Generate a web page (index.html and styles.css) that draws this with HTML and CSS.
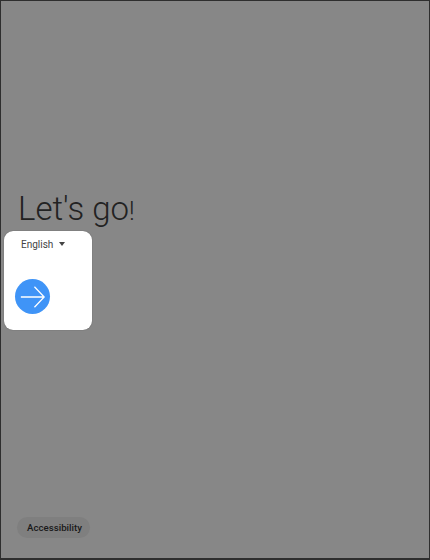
FILE: index.html
```html
<!DOCTYPE html>
<html lang="en">
<head>
  <meta charset="UTF-8" />
  <meta name="viewport" content="width=device-width, initial-scale=1.0">
  <title>Let's go!</title>
  <link rel="stylesheet" href="styles.css">
</head>
<body>
  <div class="screen">
    <div class="main">
      <h1 class="title">Let's go<span class="bang">!</span></h1>
      <div class="card">
        <div class="language">
          <span>English</span>
          <span class="caret"></span>
        </div>
        <button class="next" type="button" aria-label="Next">
          <svg width="36" height="36" viewBox="0 0 36 36" fill="none" stroke="#fff" stroke-width="1.3">
            <path d="M6 18H30M20 7.5L30 18L20 28.5" />
          </svg>
        </button>
      </div>
    </div>
    <button class="accessibility" type="button">Accessibility</button>
  </div>
</body>
</html>
```

FILE: styles.css
```css
html,
body {
  margin: 0;
  padding: 0;
}

body {
  font-family: Roboto, "Liberation Sans", sans-serif;
  background-color: #878787;
}

.screen {
  box-sizing: border-box;
  width: 430px;
  height: 560px;
  display: flex;
  flex-direction: column;
  justify-content: space-between;
  padding: 190px 0 20px 3px;
  background-color: #878787;
  border: 1px solid #2e2e2e;
  border-bottom-width: 2px;
}

.title {
  margin: 0 0 1px 14px;
  font-size: 33px;
  line-height: 36px;
  font-weight: 300;
  color: #222;
}

.bang {
  font-size: 25px;
}

.card {
  box-sizing: border-box;
  width: 88px;
  height: 99px;
  padding: 7px 0 0 11px;
  background-color: #fff;
  border-radius: 9px;
  box-shadow: 0 0 1px rgba(0, 0, 0, 0.5);
}

.language {
  display: flex;
  align-items: center;
  gap: 6px;
  padding-left: 6px;
  font-size: 10px;
  line-height: 13px;
  color: #444;
}

.caret {
  width: 0;
  height: 0;
  margin-bottom: 2px;
  border-left: 3.5px solid transparent;
  border-right: 3.5px solid transparent;
  border-top: 4px solid #444;
}

.next {
  display: flex;
  align-items: center;
  justify-content: center;
  width: 35px;
  height: 35px;
  margin-top: 28px;
  padding: 0;
  border: none;
  border-radius: 50%;
  background-color: #3f94f7;
}

.accessibility {
  align-self: flex-start;
  height: 21px;
  margin-left: 13px;
  padding: 0 8px 0 10px;
  border: none;
  border-radius: 11px;
  background-color: #7f7f7f;
  font-family: Roboto, "Liberation Sans", sans-serif;
  font-size: 9.7px;
  font-weight: 500;
  color: #1a1a1a;
}
```
